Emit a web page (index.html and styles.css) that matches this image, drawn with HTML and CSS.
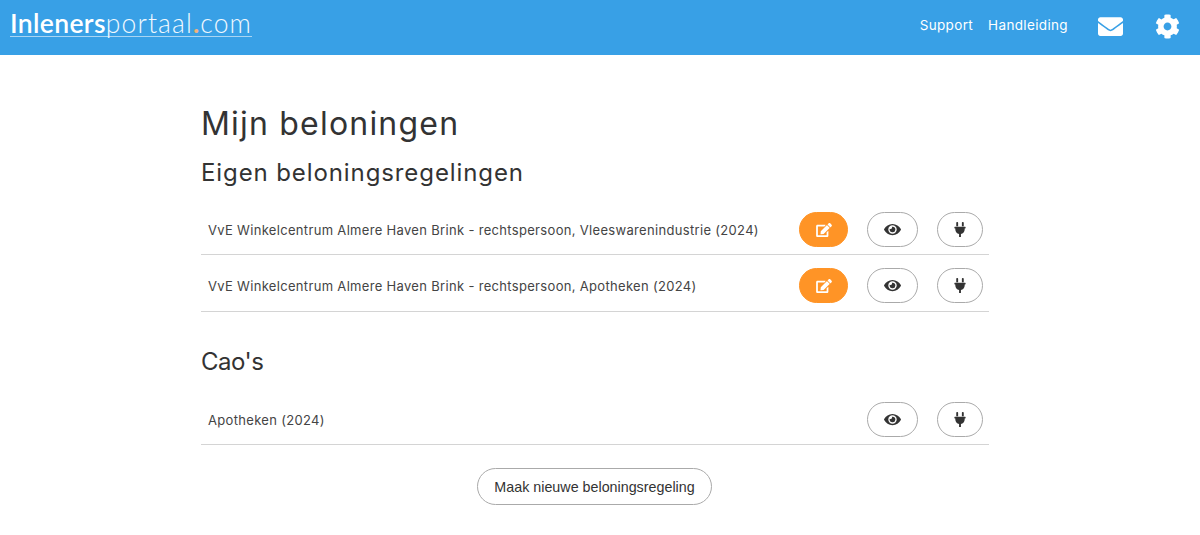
FILE: index.html
```html
<!DOCTYPE html>
<html lang="nl">
<head>
<meta charset="utf-8">
<title>Mijn beloningen</title>
<link rel="stylesheet" href="styles.css">
</head>
<body>
<svg class="defs" width="0" height="0" aria-hidden="true">
  <symbol id="i-edit" viewBox="0 0 576 512"><path d="M402.6 83.2l90.2 90.2c3.8 3.8 3.8 10 0 13.8L274.4 405.6l-92.8 10.3c-12.4 1.4-22.9-9.1-21.5-21.5l10.3-92.8L388.8 83.2c3.8-3.8 10-3.8 13.8 0zm162-22.9l-48.8-48.8c-15.2-15.2-39.9-15.2-55.2 0l-35.4 35.4c-3.8 3.8-3.8 10 0 13.8l90.2 90.2c3.8 3.8 10 3.8 13.8 0l35.4-35.4c15.2-15.3 15.2-40 0-55.2zM384 346.2V448H64V128h229.8c3.2 0 6.2-1.3 8.5-3.5l40-40c7.6-7.6 2.2-20.5-8.5-20.5H48C21.5 64 0 85.5 0 112v352c0 26.5 21.5 48 48 48h352c26.5 0 48-21.5 48-48V306.2c0-10.7-12.9-16-20.5-8.5l-40 40c-2.2 2.3-3.5 5.3-3.5 8.5z"/></symbol>
  <symbol id="i-eye" viewBox="0 0 576 512"><path d="M572.52 241.4C518.29 135.59 410.93 64 288 64S57.68 135.64 3.48 241.41a32.35 32.35 0 0 0 0 29.19C57.71 376.41 165.07 448 288 448s230.32-71.64 284.52-177.41a32.35 32.35 0 0 0 0-29.19zM288 400a144 144 0 1 1 144-144 143.93 143.93 0 0 1-144 144zm0-240a95.31 95.31 0 0 0-25.31 3.79 47.85 47.85 0 0 1-66.9 66.9A95.78 95.78 0 1 0 288 160z"/></symbol>
  <symbol id="i-plug" viewBox="0 0 384 512"><path d="M256 144V32c0-17.673 14.327-32 32-32s32 14.327 32 32v112h-64zm112 16H16c-8.837 0-16 7.163-16 16v32c0 8.837 7.163 16 16 16h16v32c0 77.406 54.969 141.971 128 156.796V512h64v-99.204c73.031-14.825 128-79.39 128-156.796v-32h16c8.837 0 16-7.163 16-16v-32c0-8.837-7.163-16-16-16zM128 144V32c0-17.673-14.327-32-32-32S64 14.327 64 32v112h64z"/></symbol>
</svg>
<header class="topbar">
  <a class="logo" href="#"><b>Inleners</b>portaal<span class="dot">.</span>com</a>
  <nav class="nav">
    <a href="#" class="nav-support">Support</a>
    <a href="#" class="nav-manual">Handleiding</a>
    <svg class="nav-mail" viewBox="0 0 512 512"><path d="M502.3 190.8c3.9-3.1 9.7-.2 9.7 4.7V400c0 26.5-21.5 48-48 48H48c-26.5 0-48-21.5-48-48V195.6c0-5 5.7-7.8 9.7-4.7 22.4 17.4 52.1 39.5 154.1 113.6 21.1 15.4 56.7 47.8 92.2 47.6 35.7.3 72-32.8 92.3-47.6 102-74.1 131.6-96.3 154-113.7zM256 320c23.2.4 56.6-29.2 73.4-41.4 132.7-96.3 142.8-104.7 173.4-128.7 5.8-4.5 9.2-11.5 9.2-18.9v-19c0-26.5-21.5-48-48-48H48C21.5 64 0 85.5 0 112v19c0 7.4 3.4 14.3 9.2 18.9 30.6 23.9 40.7 32.4 173.4 128.7 16.8 12.2 50.2 41.8 73.4 41.4z"/></svg>
    <svg class="nav-cog" viewBox="0 0 512 512"><path d="M487.4 315.7l-42.6-24.6c4.3-23.2 4.3-47 0-70.2l42.6-24.6c4.9-2.8 7.1-8.6 5.5-14-11.1-35.6-30-67.8-54.7-94.6-3.8-4.1-10-5.1-14.8-2.3L380.8 110c-17.9-15.4-38.5-27.3-60.8-35.1V25.8c0-5.6-3.9-10.5-9.4-11.7-36.7-8.2-74.3-7.8-109.2 0-5.5 1.2-9.4 6.1-9.4 11.7V75c-22.2 7.9-42.8 19.8-60.8 35.1L88.7 85.5c-4.9-2.8-11-1.9-14.8 2.3-24.7 26.7-43.6 58.9-54.7 94.6-1.7 5.4.6 11.2 5.5 14L67.3 221c-4.3 23.2-4.3 47 0 70.2l-42.6 24.6c-4.9 2.8-7.1 8.6-5.5 14 11.1 35.6 30 67.8 54.7 94.6 3.8 4.1 10 5.1 14.8 2.3l42.6-24.6c17.9 15.4 38.5 27.3 60.8 35.1v49.2c0 5.6 3.9 10.5 9.4 11.7 36.7 8.2 74.3 7.8 109.2 0 5.5-1.2 9.4-6.1 9.4-11.7v-49.2c22.2-7.9 42.8-19.8 60.8-35.1l42.6 24.6c4.9 2.8 11 1.9 14.8-2.3 24.7-26.7 43.6-58.9 54.7-94.6 1.5-5.5-.7-11.3-5.6-14.1zM256 336c-44.1 0-80-35.9-80-80s35.9-80 80-80 80 35.9 80 80-35.9 80-80 80z"/></svg>
  </nav>
</header>
<main class="content">
  <h1 class="title">Mijn beloningen</h1>
  <h2 class="section">Eigen beloningsregelingen</h2>
  <ul class="list">
    <li class="row">
      <span class="name">VvE Winkelcentrum Almere Haven Brink - rechtspersoon, Vleeswarenindustrie (2024)</span>
      <button class="btn btn-edit"><svg class="ic-edit"><use href="#i-edit"/></svg></button>
      <button class="btn btn-view"><svg class="ic-eye"><use href="#i-eye"/></svg></button>
      <button class="btn btn-plug"><svg class="ic-plug"><use href="#i-plug"/></svg></button>
    </li>
    <li class="row">
      <span class="name">VvE Winkelcentrum Almere Haven Brink - rechtspersoon, Apotheken (2024)</span>
      <button class="btn btn-edit"><svg class="ic-edit"><use href="#i-edit"/></svg></button>
      <button class="btn btn-view"><svg class="ic-eye"><use href="#i-eye"/></svg></button>
      <button class="btn btn-plug"><svg class="ic-plug"><use href="#i-plug"/></svg></button>
    </li>
  </ul>
  <h2 class="section section-cao">Cao's</h2>
  <ul class="list">
    <li class="row">
      <span class="name">Apotheken (2024)</span>
      <button class="btn btn-view"><svg class="ic-eye"><use href="#i-eye"/></svg></button>
      <button class="btn btn-plug"><svg class="ic-plug"><use href="#i-plug"/></svg></button>
    </li>
  </ul>
  <div class="actions"><button class="btn-new">Maak nieuwe beloningsregeling</button></div>
</main>
</body>
</html>
```
FILE: styles.css
```css
* { box-sizing: border-box; }
html, body { margin: 0; padding: 0; }
body { background: #fff; color: #333; font-family: "Inter", "Liberation Sans", sans-serif; height: 535px; overflow: hidden; }
.defs { display: block; height: 0; }
a { color: inherit; text-decoration: none; }
.topbar { height: 55px; background: #38a0e6; display: flex; align-items: center; justify-content: space-between; padding: 0 20px 0 10px; color: #fff; }
.logo { font-family: "Lato", sans-serif; font-size: 26.5px; font-weight: 300; letter-spacing: 1.1px; color: #f0f8fe; border-bottom: 1px solid #a9d5f3; line-height: 26px; height: 27px; margin-top: -9px; }
.logo b { font-weight: 600; color: #fff; letter-spacing: .35px; }
.dot { color: #f3b27a; font-weight: 700; }
.nav { display: flex; align-items: center; font-size: 13.5px; letter-spacing: .35px; margin-top: -5px; }
.nav-support { margin-right: 15px; margin-top: -1px; }
.nav-manual { margin-right: 30px; margin-top: -1px; }
.nav-mail { width: 25px; height: 25px; fill: #fff; margin-right: 32px; margin-top: 2px; }
.nav-cog { width: 25px; height: 25px; fill: #fff; margin-top: 2px; }
.content { width: 788px; margin: 0 0 0 201px; padding-top: 50px; }
.title { font-size: 32px; font-weight: 400; letter-spacing: 1.2px; line-height: 38px; margin: 0 0 16px; color: #333; }
.section { font-size: 24px; font-weight: 400; letter-spacing: .9px; line-height: 28px; margin: 0 0 25px; color: #333; }
.section-cao { margin-top: 36px; margin-bottom: 26px; letter-spacing: -.5px; }
.list { list-style: none; margin: 0; padding: 0; }
.row { display: flex; align-items: center; height: 43px; border-bottom: 1px solid #d4d4d4; padding: 0 6px 7px 7px; margin-bottom: 13px; }
.row + .row { height: 44px; padding-bottom: 8px; }
.name { flex: 1; font-size: 13px; letter-spacing: .32px; color: #444; }
.btn { height: 35px; border-radius: 18px; border: 1px solid #aaa; background: #fff; display: flex; align-items: center; justify-content: center; padding: 0; margin-left: 19px; }
.btn-edit { width: 49px; background: #ff9426; border-color: #ff9426; }
.btn-view { width: 51px; }
.btn-plug { width: 46px; }
.ic-edit { width: 16px; height: 14px; fill: #fff; }
.ic-eye { width: 17px; height: 15px; fill: #333; }
.ic-plug { width: 12px; height: 15px; fill: #333; }
.actions { display: flex; justify-content: center; margin-top: 23px; }
.btn-new { height: 37px; width: 235px; margin-right: 1px; border-radius: 19px; border: 1px solid #aaa; background: #fff; color: #333; font-family: "Liberation Sans", sans-serif; font-size: 14.3px; }
```
